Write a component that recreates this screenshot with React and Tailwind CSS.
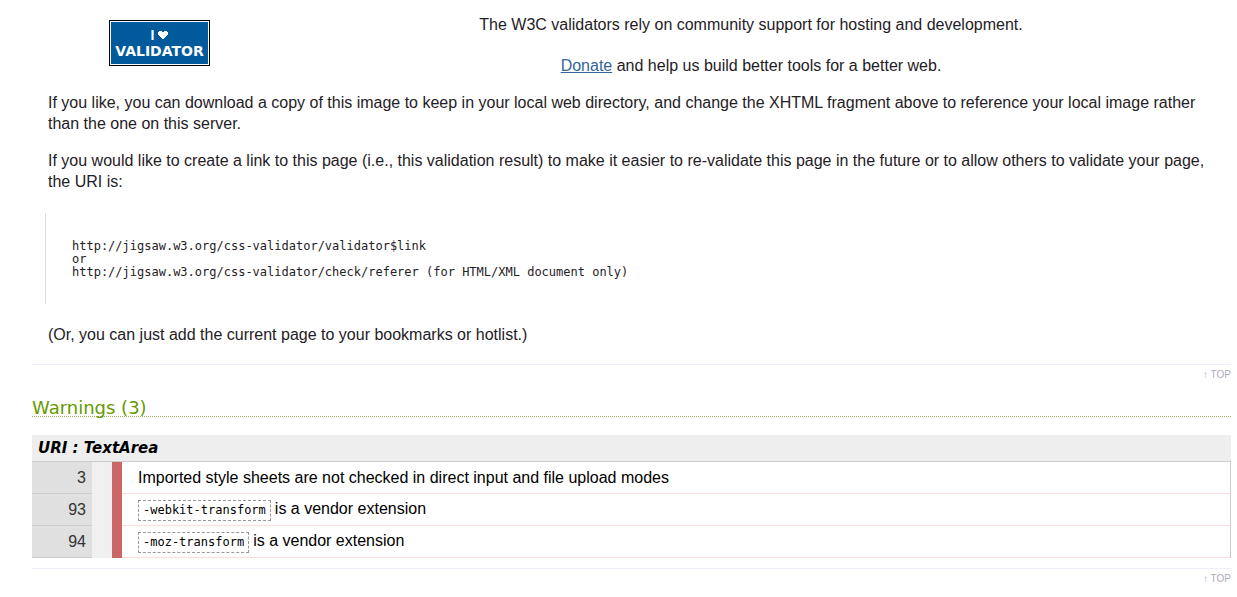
const warnings = [
  { line: 3, text: "Imported style sheets are not checked in direct input and file upload modes" },
  { line: 93, code: "-webkit-transform", text: "is a vendor extension" },
  { line: 94, code: "-moz-transform", text: "is a vendor extension" },
];

function ValidatorBadge() {
  return (
    <div className="flex h-[46px] w-[101px] flex-col items-center justify-center border border-black bg-white p-px font-['DejaVu_Sans',sans-serif] text-sm font-bold text-white">
      <div className="flex h-full w-full flex-col items-center justify-center bg-[#005a9c] leading-4">
        <span className="flex items-center gap-1">
          <span className="font-['Liberation_Sans',sans-serif]">I</span>
          <svg width="10" height="9" viewBox="0 0 10 9" fill="currentColor" shapeRendering="crispEdges" aria-hidden="true">
            <path d="M1 0H4V1H6V0H9V1H10V4H9V5H8V6H7V7H6V8H4V7H3V6H2V5H1V4H0V1H1Z" />
          </svg>
        </span>
        <span>VALIDATOR</span>
      </div>
    </div>
  );
}

function TopLink() {
  return (
    <div className="border-t border-[#eeeeff] pt-1 text-right text-[10px] leading-3">
      <a href="#top" className="text-[#aaaabb]">↑ TOP</a>
    </div>
  );
}

export default function App() {
  return (
    <main
      id="top"
      className="bg-white pt-3.5 pr-1.5 pb-3 pl-8 font-['Liberation_Sans',Arial,sans-serif] text-base leading-[21px] text-[#1f2126]"
    >
      <section className="px-4">
        <div className="flex gap-4">
          <div className="flex w-[223px] shrink-0 justify-center pt-1.5">
            <ValidatorBadge />
          </div>
          <div className="flex flex-1 flex-col gap-5 text-center">
            <p>The W3C validators rely on community support for hosting and development.</p>
            <p>
              <a href="#donate" className="text-[#336699] underline">Donate</a> and help us build better tools for a better web.
            </p>
          </div>
        </div>
        <p className="mt-4">
          If you like, you can download a copy of this image to keep in your local web directory, and change the XHTML
          fragment above to reference your local image rather than the one on this server.
        </p>
        <p className="mt-4">
          If you would like to create a link to this page (i.e., this validation result) to make it easier to re-validate
          this page in the future or to allow others to validate your page, the URI is:
        </p>
        <pre className="-ml-[3px] mt-[21px] border-l border-[#dddddd] pt-[27px] pb-[25px] pl-[26px] font-['DejaVu_Sans_Mono',monospace] text-xs leading-[13px]">
          {"http://jigsaw.w3.org/css-validator/validator$link\nor\nhttp://jigsaw.w3.org/css-validator/check/referer (for HTML/XML document only)"}
        </pre>
        <p className="mt-5 mb-[19px]">(Or, you can just add the current page to your bookmarks or hotlist.)</p>
      </section>

      <TopLink />

      <section className="mt-[19px]">
        <h2 className="border-b border-dotted border-[#aaaa66] font-['DejaVu_Sans',sans-serif] text-lg leading-4 text-[#669900]">
          Warnings (3)
        </h2>
        <h3 className="mt-[18px] bg-[#eeeeee] px-1.5 py-0.5 font-['DejaVu_Sans',sans-serif] text-[15px] leading-[22px] font-bold text-black italic">
          URI : TextArea
        </h3>
        <table className="mb-2.5 w-full border-separate border-spacing-0 border-t border-r border-[#cccccc] text-black">
          <tbody>
            {warnings.map((warning) => (
              <tr key={warning.line} className="h-8">
                <th scope="row" className="w-[60px] border-b border-[#cccccc] bg-[#e0e0e0] pr-1.5 text-right font-normal text-[#333333]">
                  {warning.line}
                </th>
                <td className="w-5 bg-[#f0f0f0] p-0" />
                <td className="w-2.5 bg-[#cc6666] p-0" />
                <td className="border-b border-[#ffdddd] pl-4">
                  {warning.code && (
                    <code className="mr-1 inline-block border border-dashed border-[#999999] px-1 font-['DejaVu_Sans_Mono',monospace] text-xs leading-[19px]">
                      {warning.code}
                    </code>
                  )}
                  {warning.text}
                </td>
              </tr>
            ))}
          </tbody>
        </table>
      </section>

      <TopLink />
    </main>
  );
}
